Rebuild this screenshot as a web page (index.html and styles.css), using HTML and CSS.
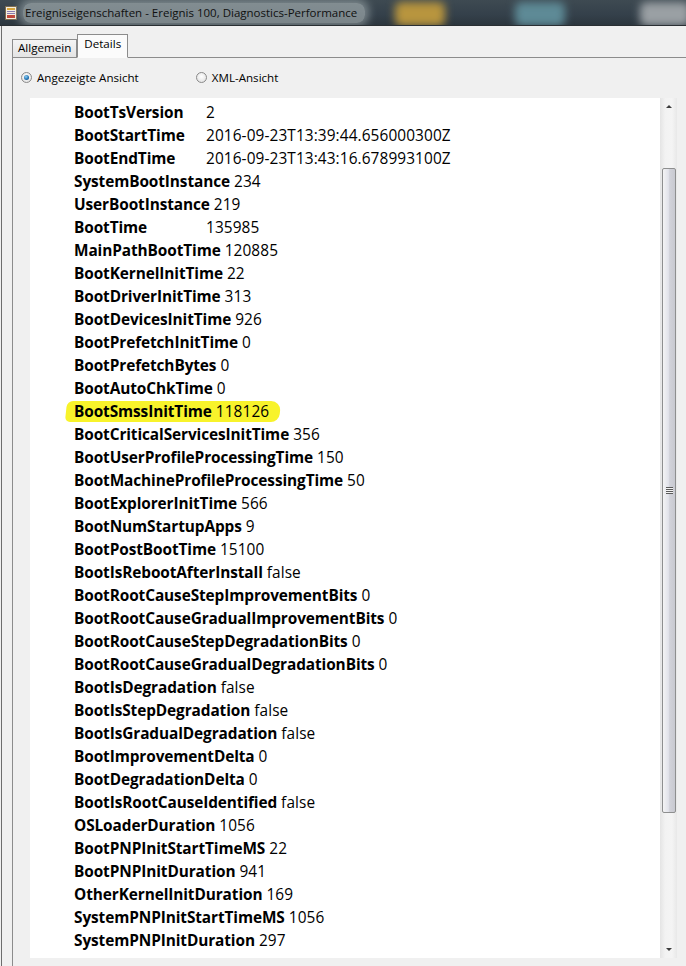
FILE: index.html
```html
<!DOCTYPE html>
<html lang="de">
<head>
<meta charset="utf-8">
<title>Ereigniseigenschaften</title>
<link rel="stylesheet" href="styles.css">
</head>
<body>
<div class="window">
  <div class="titlebar">
    <span class="blob b1"></span><span class="blob b2"></span><span class="blob b3"></span>
    <svg class="appicon" width="12" height="14" viewBox="0 0 12 14">
      <rect x="0.5" y="0.5" width="11" height="13" fill="#f4efe0" stroke="#7a6a50"/>
      <rect x="2" y="2" width="8" height="2" fill="#d9a53a"/>
      <rect x="2" y="5" width="8" height="1" fill="#8a7ab0"/>
      <rect x="2" y="7" width="8" height="1" fill="#8a7ab0"/>
      <rect x="2" y="9" width="8" height="3" fill="#c0483a"/>
    </svg>
    <span class="title">Ereigniseigenschaften - Ereignis 100, Diagnostics-Performance</span>
  </div>
  <div class="client">
    <div class="tabs">
      <div class="tab">Allgemein</div>
      <div class="tab active">Details</div>
      <div class="tabfill"></div>
    </div>
    <div class="panel">
      <div class="radios">
        <label class="radio"><span class="dot on"></span>Angezeigte Ansicht</label>
        <label class="radio"><span class="dot"></span>XML-Ansicht</label>
      </div>
      <div class="frame">
        <div class="content">
          <div class="row fixed"><b>BootTsVersion</b><span>2</span></div>
          <div class="row fixed"><b>BootStartTime</b><span>2016-09-23T13:39:44.656000300Z</span></div>
          <div class="row fixed"><b>BootEndTime</b><span>2016-09-23T13:43:16.678993100Z</span></div>
          <div class="row"><b>SystemBootInstance</b> <span>234</span></div>
          <div class="row"><b>UserBootInstance</b> <span>219</span></div>
          <div class="row fixed"><b>BootTime</b><span>135985</span></div>
          <div class="row"><b>MainPathBootTime</b> <span>120885</span></div>
          <div class="row"><b>BootKernelInitTime</b> <span>22</span></div>
          <div class="row"><b>BootDriverInitTime</b> <span>313</span></div>
          <div class="row"><b>BootDevicesInitTime</b> <span>926</span></div>
          <div class="row"><b>BootPrefetchInitTime</b> <span>0</span></div>
          <div class="row"><b>BootPrefetchBytes</b> <span>0</span></div>
          <div class="row"><b>BootAutoChkTime</b> <span>0</span></div>
          <div class="row marked"><b>BootSmssInitTime</b> <span>118126</span></div>
          <div class="row"><b>BootCriticalServicesInitTime</b> <span>356</span></div>
          <div class="row"><b>BootUserProfileProcessingTime</b> <span>150</span></div>
          <div class="row"><b>BootMachineProfileProcessingTime</b> <span>50</span></div>
          <div class="row"><b>BootExplorerInitTime</b> <span>566</span></div>
          <div class="row"><b>BootNumStartupApps</b> <span>9</span></div>
          <div class="row"><b>BootPostBootTime</b> <span>15100</span></div>
          <div class="row"><b>BootIsRebootAfterInstall</b> <span>false</span></div>
          <div class="row"><b>BootRootCauseStepImprovementBits</b> <span>0</span></div>
          <div class="row"><b>BootRootCauseGradualImprovementBits</b> <span>0</span></div>
          <div class="row"><b>BootRootCauseStepDegradationBits</b> <span>0</span></div>
          <div class="row"><b>BootRootCauseGradualDegradationBits</b> <span>0</span></div>
          <div class="row"><b>BootIsDegradation</b> <span>false</span></div>
          <div class="row"><b>BootIsStepDegradation</b> <span>false</span></div>
          <div class="row"><b>BootIsGradualDegradation</b> <span>false</span></div>
          <div class="row"><b>BootImprovementDelta</b> <span>0</span></div>
          <div class="row"><b>BootDegradationDelta</b> <span>0</span></div>
          <div class="row"><b>BootIsRootCauseIdentified</b> <span>false</span></div>
          <div class="row"><b>OSLoaderDuration</b> <span>1056</span></div>
          <div class="row"><b>BootPNPInitStartTimeMS</b> <span>22</span></div>
          <div class="row"><b>BootPNPInitDuration</b> <span>941</span></div>
          <div class="row"><b>OtherKernelInitDuration</b> <span>169</span></div>
          <div class="row"><b>SystemPNPInitStartTimeMS</b> <span>1056</span></div>
          <div class="row"><b>SystemPNPInitDuration</b> <span>297</span></div>
        </div>
        <div class="scrollbar">
          <div class="arrow up"></div>
          <div class="track">
            <div class="thumb"><span class="grip"></span></div>
          </div>
          <div class="arrow down"></div>
        </div>
      </div>
    </div>
  </div>
</div>
</body>
</html>
```

FILE: styles.css
```css
html, body {
  margin: 0;
  padding: 0;
  height: 100%;
  overflow: hidden;
  background: #f0f0f0;
}

.window {
  height: 966px;
  display: flex;
  flex-direction: column;
  font-family: "Open Sans", "Noto Sans", sans-serif;
}

.titlebar {
  position: relative;
  height: 25px;
  border-bottom: 1px solid #2a2f33;
  background: linear-gradient(180deg, #3e4a52 0%, #34404a 60%, #2c363e 100%);
  display: flex;
  align-items: center;
  overflow: hidden;
}

.blob {
  position: absolute;
  top: 2px;
  height: 24px;
  border-radius: 6px;
  filter: blur(4px);
}
.b1 { left: 395px; width: 50px; background: #b8953e; }
.b2 { left: 515px; width: 50px; background: #5e8a96; }
.b3 { left: 640px; width: 50px; background: #9aa0a4; }

.appicon {
  position: relative;
  margin-left: 5px;
  flex: none;
}

.title {
  position: relative;
  margin-left: 6px;
  font-size: 11.5px;
  color: #101010;
  padding: 2px 8px 2px 2px;
  background: rgba(200, 210, 210, 0.5);
  border-radius: 8px;
  box-shadow: 0 0 8px 4px rgba(200, 210, 210, 0.45);
  white-space: nowrap;
  line-height: 16px;
}

.client {
  flex: 1;
  display: flex;
  flex-direction: column;
  border-left: 1px solid #6d6d6d;
  margin-left: 1px;
  background: #f0f0f0;
  min-height: 0;
}

.tabs {
  display: flex;
  align-items: flex-end;
  height: 31px;
  padding-left: 10px;
}

.tab {
  font-size: 11.6px;
  color: #000;
  height: 17px;
  line-height: 16px;
  padding: 0 5px 0 5px;
  border: 1px solid #8c8c8c;
  border-bottom: none;
  background: linear-gradient(180deg, #f4f4f4 0%, #e4e4e4 100%);
  margin-bottom: 0;
}

.tab.active {
  height: 22px;
  padding: 0 6px;
  background: #fbfbfb;
  border-bottom: 1px solid #fbfbfb;
  margin-bottom: -1px;
  position: relative;
  line-height: 18px;
}

.tabfill {
  flex: 1;
}

.panel {
  flex: 1;
  display: flex;
  flex-direction: column;
  border-top: 1px solid #8c8c8c;
  border-left: 1px solid #8c8c8c;
  margin-left: 10px;
  min-height: 0;
}

.radios {
  display: flex;
  align-items: center;
  height: 40px;
  padding-left: 8px;
  font-size: 11.6px;
}

.radio {
  display: flex;
  align-items: center;
  gap: 5px;
  margin-right: 57px;
  position: relative;
  top: -1px;
}

.dot {
  width: 11px;
  height: 11px;
  border-radius: 50%;
  border: 1px solid #8a8a8a;
  background: radial-gradient(circle at 50% 40%, #ffffff 0%, #dcdcdc 100%);
  box-sizing: border-box;
  display: inline-flex;
  align-items: center;
  justify-content: center;
}

.dot.on::after {
  content: "";
  width: 5px;
  height: 5px;
  border-radius: 50%;
  background: radial-gradient(circle at 40% 35%, #8fd0f5 0%, #1d6fb0 60%, #0c3f78 100%);
}

.frame {
  flex: 1;
  display: flex;
  margin-left: 17px;
  margin-right: 9px;
  margin-bottom: 8px;
  min-height: 0;
  background: #fff;
}

.content {
  flex: 1;
  padding: 3px 0 0 44px;
  overflow: hidden;
  font-size: 15.4px;
  color: #000;
}

.row {
  height: 23px;
  line-height: 23px;
  white-space: nowrap;
  position: relative;
}

.row b {
  font-weight: 700;
  letter-spacing: -0.1px;
}

.row span {
  letter-spacing: 0.1px;
}

.row.fixed b {
  display: inline-block;
  width: 132px;
}

.row.marked b,
.row.marked span {
  position: relative;
}

.row.marked::before {
  content: "";
  position: absolute;
  left: -8px;
  top: 1px;
  width: 214px;
  height: 21px;
  background: #f8f32b;
  border-radius: 6px 10px 8px 5px;
  transform: skewX(-6deg);
}

.scrollbar {
  width: 17px;
  flex: none;
  display: flex;
  flex-direction: column;
  background: linear-gradient(90deg, #e4e4e4 0%, #f2f2f2 30%, #f4f4f4 70%, #e8e8e8 100%);
}

.arrow {
  height: 17px;
  flex: none;
  display: flex;
  align-items: center;
  justify-content: center;
}

.arrow::after {
  content: "";
  width: 0;
  height: 0;
  border-left: 3px solid transparent;
  border-right: 3px solid transparent;
}

.arrow.up::after {
  border-bottom: 3px solid #3c3c3c;
}

.arrow.down::after {
  border-top: 3px solid #3c3c3c;
}

.track {
  flex: 1;
  padding-top: 53px;
  padding-bottom: 128px;
  display: flex;
  flex-direction: column;
}

.thumb {
  flex: 1;
  margin: 0 1px 0 2px;
  border: 1px solid #8e8f8f;
  border-radius: 2px;
  background: linear-gradient(90deg, #f4f4f4 0%, #e2e3ea 45%, #d2d3da 55%, #c8c9d0 100%);
  display: flex;
  align-items: center;
  justify-content: center;
}

.grip {
  width: 7px;
  height: 7px;
  background: repeating-linear-gradient(180deg, #5a5a5a 0, #5a5a5a 1px, #f4f4f4 1px, #f4f4f4 2px);
}
```
